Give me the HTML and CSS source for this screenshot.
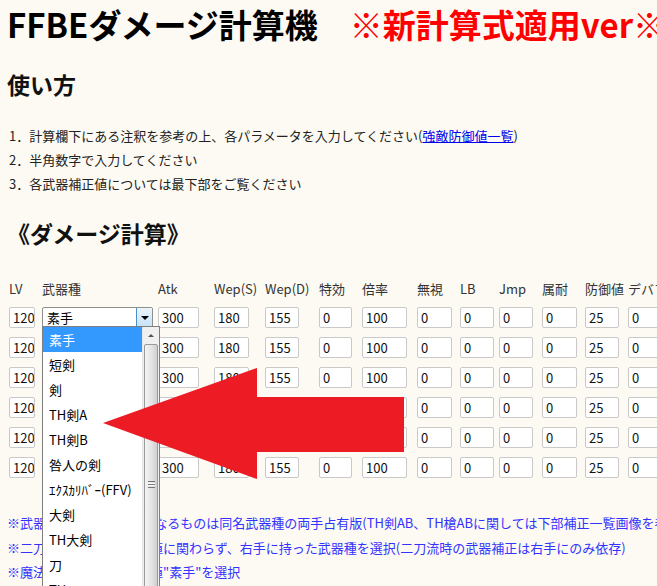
FILE: index.html
```html
<!DOCTYPE html>
<html>
<head>
    <meta charset="utf-8">
    <link rel="stylesheet" href="styles.css">
</head>
<body>
    <div class="page">
        <h1 class="title">FFBEダメージ計算機<span class="title-note">※新計算式適用ver※</span></h1>

        <h2 class="section">使い方</h2>
        <ol class="howto">
            <li>1．計算欄下にある注釈を参考の上、各パラメータを入力してください(<a href="#">強敵防御値一覧</a>)</li>
            <li>2．半角数字で入力してください</li>
            <li>3．各武器補正値については最下部をご覧ください</li>
        </ol>

        <h2 class="section calc-title">《ダメージ計算》</h2>

        <div class="calc">
            <div class="grid">
                <div class="label">LV</div>
                <div class="label">武器種</div>
                <div class="label">Atk</div>
                <div class="label">Wep(S)</div>
                <div class="label">Wep(D)</div>
                <div class="label">特効</div>
                <div class="label">倍率</div>
                <div class="label">無視</div>
                <div class="label">LB</div>
                <div class="label">Jmp</div>
                <div class="label">属耐</div>
                <div class="label">防御値</div>
                <div class="label">デバフ</div>
            </div>
            <div class="grid rows" id="rows"></div>

            <!-- 開いた状態のドロップダウン -->
            <div class="dropdown">
                <ul class="options">
                    <li class="selected">素手</li>
                    <li>短剣</li>
                    <li>剣</li>
                    <li>TH剣A</li>
                    <li>TH剣B</li>
                    <li>咎人の剣</li>
                    <li>ｴｸｽｶﾘﾊﾞｰ(FFV)</li>
                    <li>大剣</li>
                    <li>TH大剣</li>
                    <li>刀</li>
                    <li>TH刀</li>
                    <li>槍</li>
                </ul>
                <div class="scrollbar">
                    <div class="scroll-up"></div>
                    <div class="thumb"><span class="grip"></span></div>
                </div>
            </div>
        </div>

        <div class="notes">
            <p>※武器種の頭文字がTHになるものは同名武器種の両手占有版(TH剣AB、TH槍ABに関しては下部補正一覧画像を参照)</p>
            <p>※二刀流時は左手の補正値に関わらず、右手に持った武器種を選択(二刀流時の武器補正は右手にのみ依存)</p>
            <p>※魔法攻撃の場合は既定値"素手"を選択</p>
        </div>
    </div>

    <svg class="arrow" width="657" height="586" viewBox="0 0 657 586">
        <polygon points="103,423 257,368 257,397 404,397 404,452 257,452 257,479" fill="#ed1c24"/>
    </svg>

    <script>
        const ROW_COUNT = 6;
        const defaults = [
            ['lv', '120'], ['select', '素手'], ['atk', '300'], ['ws', '180'], ['wd', '155'],
            ['tk', '0'], ['rate', '100'], ['mu', '0'], ['lb', '0'], ['jmp', '0'],
            ['zk', '0'], ['def', '25'], ['deb', '0']
        ];

        const rows = document.getElementById('rows');
        for (let r = 0; r < ROW_COUNT; r++) {
            defaults.forEach(([key, value]) => {
                if (key === 'select') {
                    const sel = document.createElement('div');
                    sel.className = 'select';
                    sel.innerHTML = '<span class="select-text">' + value + '</span><span class="select-btn"></span>';
                    rows.appendChild(sel);
                } else {
                    const input = document.createElement('input');
                    input.type = 'text';
                    input.value = value;
                    input.className = 'num num-' + key;
                    rows.appendChild(input);
                }
            });
        }
    </script>
</body>
</html>
```

FILE: styles.css
```css
/* ページ全体 */
html, body {
    margin: 0;
    height: 100%;
    overflow: hidden;
}

body {
    background: #fcfaf3;
    font-family: "Noto Sans CJK JP", sans-serif;
    font-size: 13px;
    color: #222;
    position: relative;
}

.page {
    padding-left: 7px;
}

/* タイトル */
.title {
    margin: 4px 0 0;
    font-size: 33px;
    line-height: 40px;
    font-weight: bold;
    color: #000;
    white-space: nowrap;
}

.title-note {
    color: #ff0000;
    margin-left: 32px;
}

/* 見出し */
.section {
    margin: 25px 0 0;
    font-size: 23px;
    line-height: 30px;
    font-weight: bold;
    color: #111;
}

.calc-title {
    margin-top: 22px;
}

/* 使い方 */
.howto {
    list-style: none;
    margin: 25px 0 0;
    padding: 0 0 0 2px;
    line-height: 24px;
}

.howto a {
    color: #0000ee;
}

/* 計算表 */
.calc {
    position: relative;
    margin: 32px 0 0 2px;
}

.grid {
    display: grid;
    grid-template-columns: 33px 116px 56px 51px 54px 43px 55px 43px 39px 43px 43px 43px 43px;
    white-space: nowrap;
}

.label {
    line-height: 18px;
    color: #333;
}

.rows {
    margin-top: 9px;
    grid-auto-rows: 21px;
    row-gap: 9px;
}

.num {
    box-sizing: border-box;
    width: 34px;
    height: 21px;
    margin: 0;
    padding: 0 0 0 3px;
    border: 1px solid #c9c9c9;
    border-radius: 2px;
    background: #fff;
    font-family: "Noto Sans CJK JP", sans-serif;
    font-size: 13px;
    color: #111;
    outline: none;
}

.num-lv { width: 26px; }
.num-atk { width: 41px; }
.num-ws { width: 35px; }
.num-tk { width: 33px; }
.num-rate { width: 45px; }
.num-mu { width: 35px; }
.num-zk { width: 35px; }

/* 武器種セレクト */
.select {
    box-sizing: border-box;
    width: 111px;
    height: 21px;
    display: flex;
    align-items: stretch;
    border: 1px solid #8e8f8f;
    border-radius: 2px;
    background: #fff;
}

.select-text {
    flex: 1;
    padding-left: 4px;
    line-height: 19px;
    font-size: 13px;
    color: #000;
}

.select-btn {
    width: 15px;
    display: flex;
    align-items: center;
    justify-content: center;
    background: linear-gradient(#eaf5fd, #c6e2f7);
    border-left: 1px solid #4b8fc8;
}

.select-btn::after {
    content: "";
    border-left: 4px solid transparent;
    border-right: 4px solid transparent;
    border-top: 4px solid #000;
}

/* 開いたリスト */
.dropdown {
    position: absolute;
    left: 33px;
    top: 46px;
    width: 118px;
    height: 300px;
    box-sizing: border-box;
    display: flex;
    border: 1px solid #7f7f7f;
    background: #fff;
    z-index: 2;
}

.options {
    flex: 1;
    list-style: none;
    margin: 0;
    padding: 0;
}

.options li {
    height: 25px;
    line-height: 25px;
    padding-left: 6px;
    font-size: 13px;
    color: #000;
    white-space: nowrap;
}

.options .selected {
    background: #3399ff;
    color: #fff;
}

.scrollbar {
    width: 16px;
    display: flex;
    flex-direction: column;
    background: #f0f0f0;
    border-left: 1px solid #e6e6e6;
}

.scroll-up {
    height: 17px;
    display: flex;
    align-items: center;
    justify-content: center;
}

.scroll-up::after {
    content: "";
    border-left: 3px solid transparent;
    border-right: 3px solid transparent;
    border-bottom: 3px solid #555;
}

.thumb {
    flex: 1;
    margin: 0 1px;
    border: 1px solid #9a9a9a;
    border-radius: 2px;
    background: linear-gradient(to right, #f4f4f4, #e4e4e4 55%, #cfcfcf);
    display: flex;
    align-items: center;
    justify-content: center;
}

.grip {
    width: 7px;
    height: 5px;
    border-top: 1px solid #777;
    border-bottom: 1px solid #777;
    background: linear-gradient(#fff 0 1px, #777 1px 2px, #fff 2px 3px) 0 1px / 7px 3px no-repeat;
}

/* 注釈 */
.notes {
    margin-top: 33px;
    color: #3333ff;
    line-height: 24.5px;
    white-space: nowrap;
}

.notes p {
    margin: 0;
}

/* 説明用の矢印 */
.arrow {
    position: absolute;
    left: 0;
    top: 0;
    z-index: 5;
    pointer-events: none;
}
```
